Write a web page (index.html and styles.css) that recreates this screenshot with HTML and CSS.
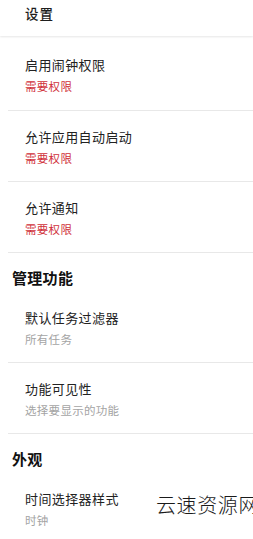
FILE: index.html
```html
<!DOCTYPE html>
<html lang="zh-CN">
<head>
<meta charset="utf-8">
<title>设置</title>
<link rel="stylesheet" href="styles.css">
</head>
<body>
<div class="screen">
  <header class="appbar"><span class="appbar-title">设置</span></header>
  <div class="list">
    <div class="item item-top">
      <div class="item-title">启用闹钟权限</div>
      <div class="item-sub warn">需要权限</div>
    </div>
    <div class="item">
      <div class="item-title">允许应用自动启动</div>
      <div class="item-sub warn">需要权限</div>
    </div>
    <div class="item">
      <div class="item-title">允许通知</div>
      <div class="item-sub warn">需要权限</div>
    </div>
    <div class="section">
      <div class="section-title">管理功能</div>
      <div class="item item-first">
        <div class="item-title">默认任务过滤器</div>
        <div class="item-sub">所有任务</div>
      </div>
      <div class="item">
        <div class="item-title">功能可见性</div>
        <div class="item-sub">选择要显示的功能</div>
      </div>
    </div>
    <div class="section">
      <div class="section-title">外观</div>
      <div class="item item-first">
        <div class="item-title">时间选择器样式</div>
        <div class="item-sub">时钟</div>
      </div>
    </div>
  </div>
  <div class="watermark">云速资源网</div>
</div>
</body>
</html>
```

FILE: styles.css
```css
* { box-sizing: border-box; }
html, body {
  margin: 0;
  padding: 0;
  background: #ffffff;
}
body {
  font-family: "Noto Sans CJK SC", "Noto Sans", sans-serif;
  color: #212121;
  overflow: hidden;
}
.screen {
  position: relative;
  width: 253px;
  height: 539px;
  overflow: hidden;
}
.appbar {
  height: 36px;
  padding: 3px 0 0 25px;
  background: #ffffff;
  box-shadow: 0 1px 2px rgba(0, 0, 0, 0.10);
  position: relative;
  z-index: 1;
}
.appbar-title {
  display: block;
  font-size: 13.5px;
  line-height: 20px;
  font-weight: 500;
  letter-spacing: 1px;
  color: #1e1e1e;
}
.list {
  margin-left: 8px;
}
.item {
  border-top: 1px solid #e8e8e8;
  padding: 16px 0 15px 17px;
}
.item-top {
  border-top: none;
  padding-top: 19px;
  padding-bottom: 16px;
}
.item-first {
  border-top: none;
}
.item-title {
  font-size: 13px;
  line-height: 20px;
  letter-spacing: 0.4px;
  color: #222222;
}
.item-sub {
  margin-top: 3px;
  font-size: 11.5px;
  line-height: 16px;
  letter-spacing: 0.3px;
  color: #a4a4a4;
}
.item-sub.warn {
  color: #d0313a;
}
.section {
  border-top: 1px solid #e8e8e8;
}
.section-title {
  padding: 15px 0 4px 4px;
  font-size: 15px;
  line-height: 20px;
  font-weight: 700;
  letter-spacing: 0.3px;
  color: #111111;
}
.watermark {
  position: absolute;
  left: 156px;
  top: 492px;
  font-size: 20px;
  line-height: 26px;
  font-weight: 300;
  letter-spacing: 0.6px;
  white-space: nowrap;
  color: #1a1a1a;
}
```
